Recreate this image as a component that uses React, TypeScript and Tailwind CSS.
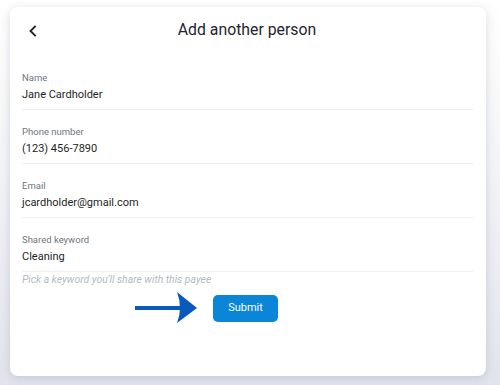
import React from "react";

const fields = [
  { label: "Name", value: "Jane Cardholder" },
  { label: "Phone number", value: "(123) 456-7890" },
  { label: "Email", value: "jcardholder@gmail.com" },
  { label: "Shared keyword", value: "Cleaning" },
];

function Field({ label, value, first }: { label: string; value: string; first?: boolean }) {
  return (
    <div className={`${first ? "" : "pt-[15px]"} pb-[6px] border-b border-[#eeeff1]`}>
      <div className="text-[9.5px] leading-[14px] text-[#6f7680]">{label}</div>
      <div className="mt-[2px] text-[11px] leading-[16px] text-[#1c1f24]">{value}</div>
    </div>
  );
}

export default function App() {
  return (
    <div
      className="w-[500px] h-[385px] pt-[7px] pl-[10px] bg-gradient-to-b from-[#ffffff] via-[#f1f2f6] to-[#e1e4ec]"
      style={{ fontFamily: "Roboto, 'Noto Sans', sans-serif" }}
    >
      <div className="w-[476px] h-[369px] bg-white rounded-[8px] shadow-[0_2px_10px_rgba(60,70,100,0.18)] flex flex-col">
        {/* Header */}
        <div className="h-[46px] grid grid-cols-[40px_1fr_40px] items-center px-[12px]">
          <div className="flex items-center pl-[6px] pt-[2px]">
            <svg width="10" height="12" viewBox="0 0 10 12" fill="none">
              <path d="M7 1.5 L2.5 6 L7 10.5" stroke="#1f2530" strokeWidth="1.9" strokeLinecap="square" />
            </svg>
          </div>
          <h1 className="text-center text-[15.8px] leading-[20px] text-[#1f2530] pr-[2px]">Add another person</h1>
          <div />
        </div>

        {/* Form */}
        <div className="pl-[12px] pr-[13px] pt-[18px]">
          {fields.map((f, i) => (
            <Field key={f.label} label={f.label} value={f.value} first={i === 0} />
          ))}
          <div className="mt-[1px] text-[10.4px] leading-[14px] italic text-[#b3bac5]">
            Pick a keyword you'll share with this payee
          </div>
        </div>

        <div className="mt-[7px] flex justify-center pr-[5px]">
          <div className="relative">
            {/* annotation arrow */}
            <svg width="64" height="32" viewBox="0 0 64 32" className="absolute left-[-78px] top-[-2px]">
              <rect x="0" y="14" width="46" height="4" fill="#0a59bd" />
              <path d="M42 0 L62 16 L42 31 Q48 16 42 0 Z" fill="#0a59bd" />
            </svg>
            <button className="w-[65px] h-[27px] rounded-[5px] bg-[#0a85d8] text-white text-[11px] font-normal">
              Submit
            </button>
          </div>
        </div>
      </div>
    </div>
  );
}
